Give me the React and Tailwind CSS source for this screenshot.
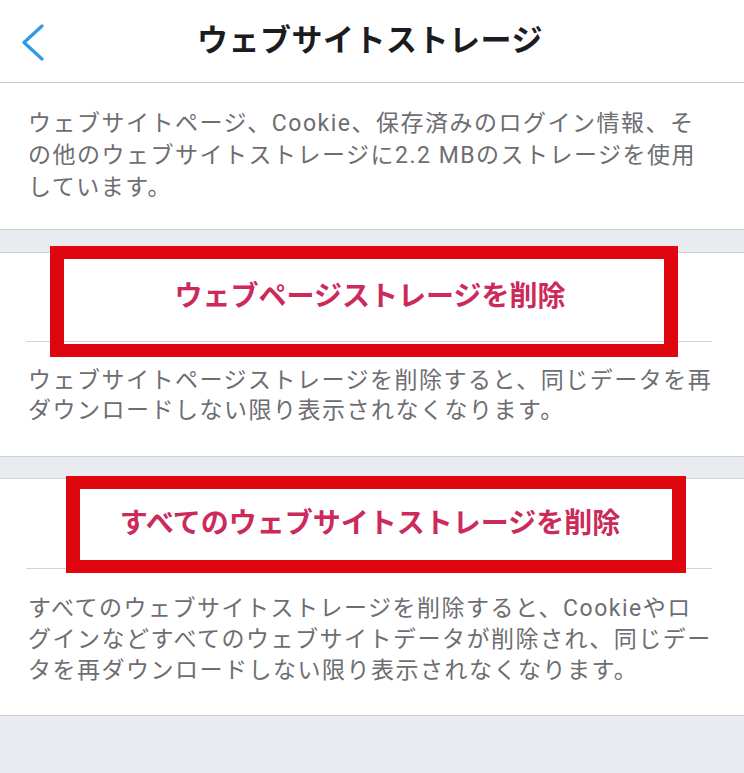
import React from "react";

const font = { fontFamily: 'Roboto, "Noto Sans CJK JP", sans-serif' };

function Chevron() {
  return (
    <svg width="24" height="37" viewBox="0 0 24 37" fill="none">
      <polyline points="21,2 3,18.5 21,35" stroke="#2a9be8" strokeWidth="3.2" strokeLinecap="round" strokeLinejoin="round" />
    </svg>
  );
}

export default function App() {
  return (
    <div className="w-[744px] h-[773px] bg-[#e8ebf0] overflow-hidden" style={font}>
      {/* header */}
      <div className="h-[83px] bg-white border-b border-[#c8c7cc] grid grid-cols-[1fr_auto_1fr] items-center">
        <div className="pl-[21px] pt-[2px] flex items-center">
          <Chevron />
        </div>
        <div className="text-[31px] font-bold text-[#1c1c1e] tracking-[0.5px] pr-[4px]">ウェブサイトストレージ</div>
        <div />
      </div>

      {/* usage description */}
      <div className="bg-white border-b border-[#cfd0d4] px-[28px] pt-[25px] pb-[25px] text-[23px] tracking-[1.5px] leading-[32px] text-[#6d6d72] whitespace-nowrap">
        ウェブサイトページ、Cookie、保存済みのログイン情報、そ<br />
        の他のウェブサイトストレージに2.2 MBのストレージを使用<br />
        しています。
      </div>

      <div className="h-[22px]" />

      {/* section 2 */}
      <div className="relative bg-white border-y border-[#cfd0d4]">
        <div className="h-[88px] flex items-center justify-center text-[28px] font-bold text-[#cc2a5a] pr-[4px]">
          ウェブページストレージを削除
        </div>
        <div className="h-px bg-[#d4d4d8] ml-[26px] mr-[32px]" />
        <div className="px-[28px] pt-[24px] pb-[30px] text-[23px] tracking-[1.5px] leading-[30px] text-[#6d6d72] whitespace-nowrap">
          ウェブサイトページストレージを削除すると、同じデータを再<br />
          ダウンロードしない限り表示されなくなります。
        </div>
        <div className="absolute left-[50px] top-[-7px] w-[628px] h-[111px] border-x-[14px] border-y-[13px] border-[#e0060f]" />
      </div>

      <div className="h-[21px]" />

      {/* section 3 */}
      <div className="relative bg-white border-y border-[#cfd0d4]">
        <div className="h-[89px] flex items-center justify-center text-[28px] font-bold text-[#cc2a5a] pr-[4px]">
          すべてのウェブサイトストレージを削除
        </div>
        <div className="h-px bg-[#d4d4d8] ml-[26px] mr-[32px]" />
        <div className="px-[28px] pt-[24px] pb-[29px] text-[23px] tracking-[1.5px] leading-[31px] text-[#6d6d72] whitespace-nowrap">
          すべてのウェブサイトストレージを削除すると、Cookieやロ<br />
          グインなどすべてのウェブサイトデータが削除され、同じデー<br />
          タを再ダウンロードしない限り表示されなくなります。
        </div>
        <div className="absolute left-[66px] top-[-3px] w-[620px] h-[97px] border-x-[14px] border-y-[13px] border-[#e0060f]" />
      </div>
    </div>
  );
}
